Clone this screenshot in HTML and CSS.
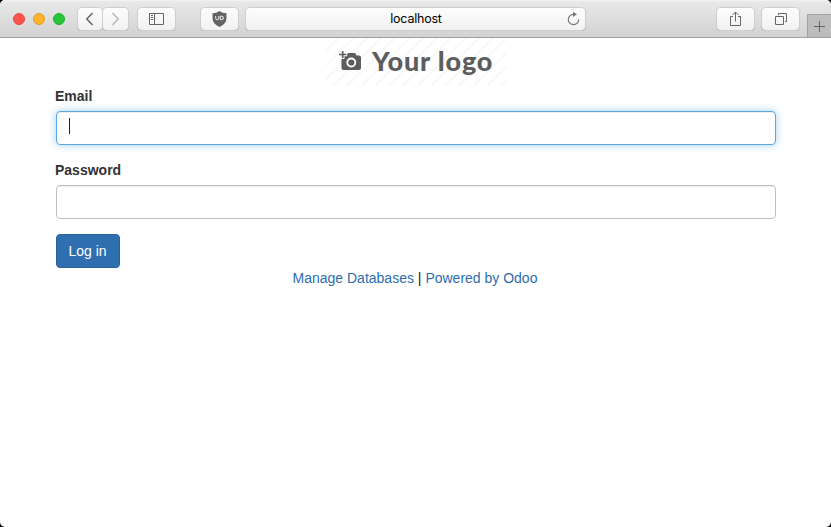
FILE: index.html
```html
<!DOCTYPE html>
<html lang="en">
<head>
<meta charset="utf-8">
<title>Login</title>
<link rel="stylesheet" href="styles.css">
</head>
<body>
<div class="window">
  <header class="toolbar">
    <div class="lights"><i class="light red"></i><i class="light yellow"></i><i class="light green"></i></div>
    <div class="nav">
      <span class="tool"><svg width="24" height="22" fill="none" stroke="#666" stroke-width="1.5"><path d="M14.500 5 8.800 11l5.700 6"/></svg></span>
      <span class="tool"><svg width="25" height="22" fill="none" stroke="#b8b8b8" stroke-width="1.5"><path d="M9.500 5 15.200 11l-5.700 6"/></svg></span>
    </div>
    <span class="tool sidebar"><svg width="37" height="22" fill="none" stroke="#666"><path d="M11.500 5.500h14v11h-14zM16.500 5.500v11M13 7.500h2M13 9.500h2M13 11.500h2"/></svg></span>
    <span class="tool shield"><svg width="37" height="22"><path d="M18.500 3Q21.500 5.200 25.500 5.200V10Q25.500 16 18.500 19Q11.500 16 11.500 10V5.200Q15.500 5.200 18.500 3Z" fill="#636363"/><path d="M14.700 8.200v2.300q0 1.200 1.500 1.200t1.500-1.200V8.200M19.300 8.200v3.500h1q2.200 0 2.200-1.750t-2.200-1.750z" fill="none" stroke="#f5f5f5"/></svg></span>
    <div class="tool address"><span class="host">localhost</span><svg class="reload" width="16" height="18"><path d="M8.500 4.300A5.200 5.200 0 1 0 13.700 9.500" fill="none" stroke="#777" stroke-width="1.200"/><path d="M8 1.700 12 4.300 8 7z" fill="#777"/></svg></div>
    <span class="tool share"><svg width="37" height="22" fill="none" stroke="#666"><path d="M16 8.500h-2.500v9h10v-9H21M18.500 13.500V4M15.500 7l3-3 3 3"/></svg></span>
    <span class="tool tabs"><svg width="37" height="22" fill="none" stroke="#666"><path d="M13.500 8.500h8v8h-8zM16.500 7V5.500h8v8H23"/></svg></span>
    <span class="newtab"><svg width="23" height="22" stroke="#666"><path d="M6 11.500h11M11.500 6v11"/></svg></span>
  </header>
  <main class="page">
    <div class="logo">
      <svg width="24" height="24"><path d="M2.500 6.500H7L9 4h7l1.700 2.500H20q2 0 2 2V19q0 2-2 2H4.500q-2 0-2-2z" fill="#5d5d5d"/><path d="M0 5.500h8.200M3.700 1v9" stroke="#fff" stroke-width="3.500"/><path d="M0 5.500h7.400M3.700 2v7" stroke="#5d5d5d" stroke-width="1.700"/><circle cx="12.300" cy="13.500" r="4" fill="#5d5d5d" stroke="#fff" stroke-width="1.800"/></svg>
      <span class="logo-text">Your logo</span>
    </div>
    <form class="login">
      <label class="label" for="email">Email</label>
      <div class="field focused" id="email"><span class="caret"></span></div>
      <label class="label" for="password">Password</label>
      <div class="field" id="password"></div>
      <button class="submit" type="button">Log in</button>
    </form>
    <footer class="links"><a>Manage Databases</a> <span>|</span> <a>Powered by Odoo</a></footer>
  </main>
</div>
</body>
</html>
```
FILE: styles.css
```css
* { box-sizing: border-box; }
body { margin: 0; background: #000; font: 14px/20px "Liberation Sans", Arial, sans-serif; color: #333; }
svg { display: block; flex: none; }
.window { height: 527px; background: #fff; border-radius: 5px; overflow: hidden; }
.toolbar { display: flex; height: 38px; padding: 8px 0 0 13px; background: linear-gradient(#f4f4f4 0, #e8e8e8 2px, #d2d2d2 100%); border-bottom: 1px solid #a0a0a0; }
.lights { display: flex; gap: 8px; width: 65px; padding-top: 5px; }
.light { width: 12px; height: 12px; border-radius: 50%; }
.red { background: #fc544e; border: 1px solid #e5443e; }
.yellow { background: #fdb32b; border: 1px solid #e29d25; }
.green { background: #27c338; border: 1px solid #1fac2c; }
.tool { display: flex; height: 22px; border-radius: 4px; background: linear-gradient(#fdfdfd, #f1f1f1); box-shadow: 0 0 0 1px #cecece, 0 1px 0 1px #b5b5b5; clip-path: inset(-1px -1px -1px -1px round 4px); flex: none; }
.nav { display: flex; gap: 1px; width: 60px; }
.sidebar { width: 37px; margin-right: 26px; }
.shield { width: 37px; margin-right: 8px; }
.address { width: 339px; margin-right: 132px; position: relative; align-items: center; justify-content: center; color: #000; }
.host { font: 12.5px/22px Inter, sans-serif; letter-spacing: -.22px; padding-left: 1px; }
.reload { position: absolute; right: 4px; top: 2px; }
.share { width: 37px; margin-right: 8px; }
.tabs { width: 37px; }
.newtab { width: 24px; height: 23px; margin: 6px 0 0 auto; border: 1px solid #a0a0a0; border-width: 1px 0 0 1px; background: #bdbdbd; flex: none; }
.page { padding: 0 55px 0 56px; }
.logo { width: 180px; height: 48px; margin: 0 auto; display: flex; align-items: center; padding: 0 0 2px 13px; background: repeating-linear-gradient(135deg, #fff 0 8px, #f7f7f7 9px 9.900px); color: #5d5d5d; }
.logo-text { font: 900 27px/32px Lato, sans-serif; letter-spacing: .85px; margin-left: 9px; white-space: nowrap; }
.login { display: flex; flex-direction: column; align-items: flex-start; }
.label { font-weight: bold; margin-bottom: 5px; margin-left: -1px; }
.field { width: 100%; height: 34px; border: 1px solid #bfbfbf; border-radius: 4px; margin-bottom: 15px; padding: 6px 12px; box-shadow: inset 0 1px 1px rgba(0,0,0,.075); }
.focused { border-color: #5ca5e3; box-shadow: inset 0 1px 1px rgba(0,0,0,.075), 0 0 8px rgba(102,175,233,.6); }
.caret { display: block; width: 1px; height: 16px; background: #222; }
.submit { width: 64px; height: 34px; padding: 0 1px 0 0; border: 1px solid #2a62a0; border-radius: 4px; background: #2f6fb0; color: #fff; font: inherit; }
.links { text-align: center; color: #222; padding-right: 2px; }
.links a { color: #2d6cae; }
```
